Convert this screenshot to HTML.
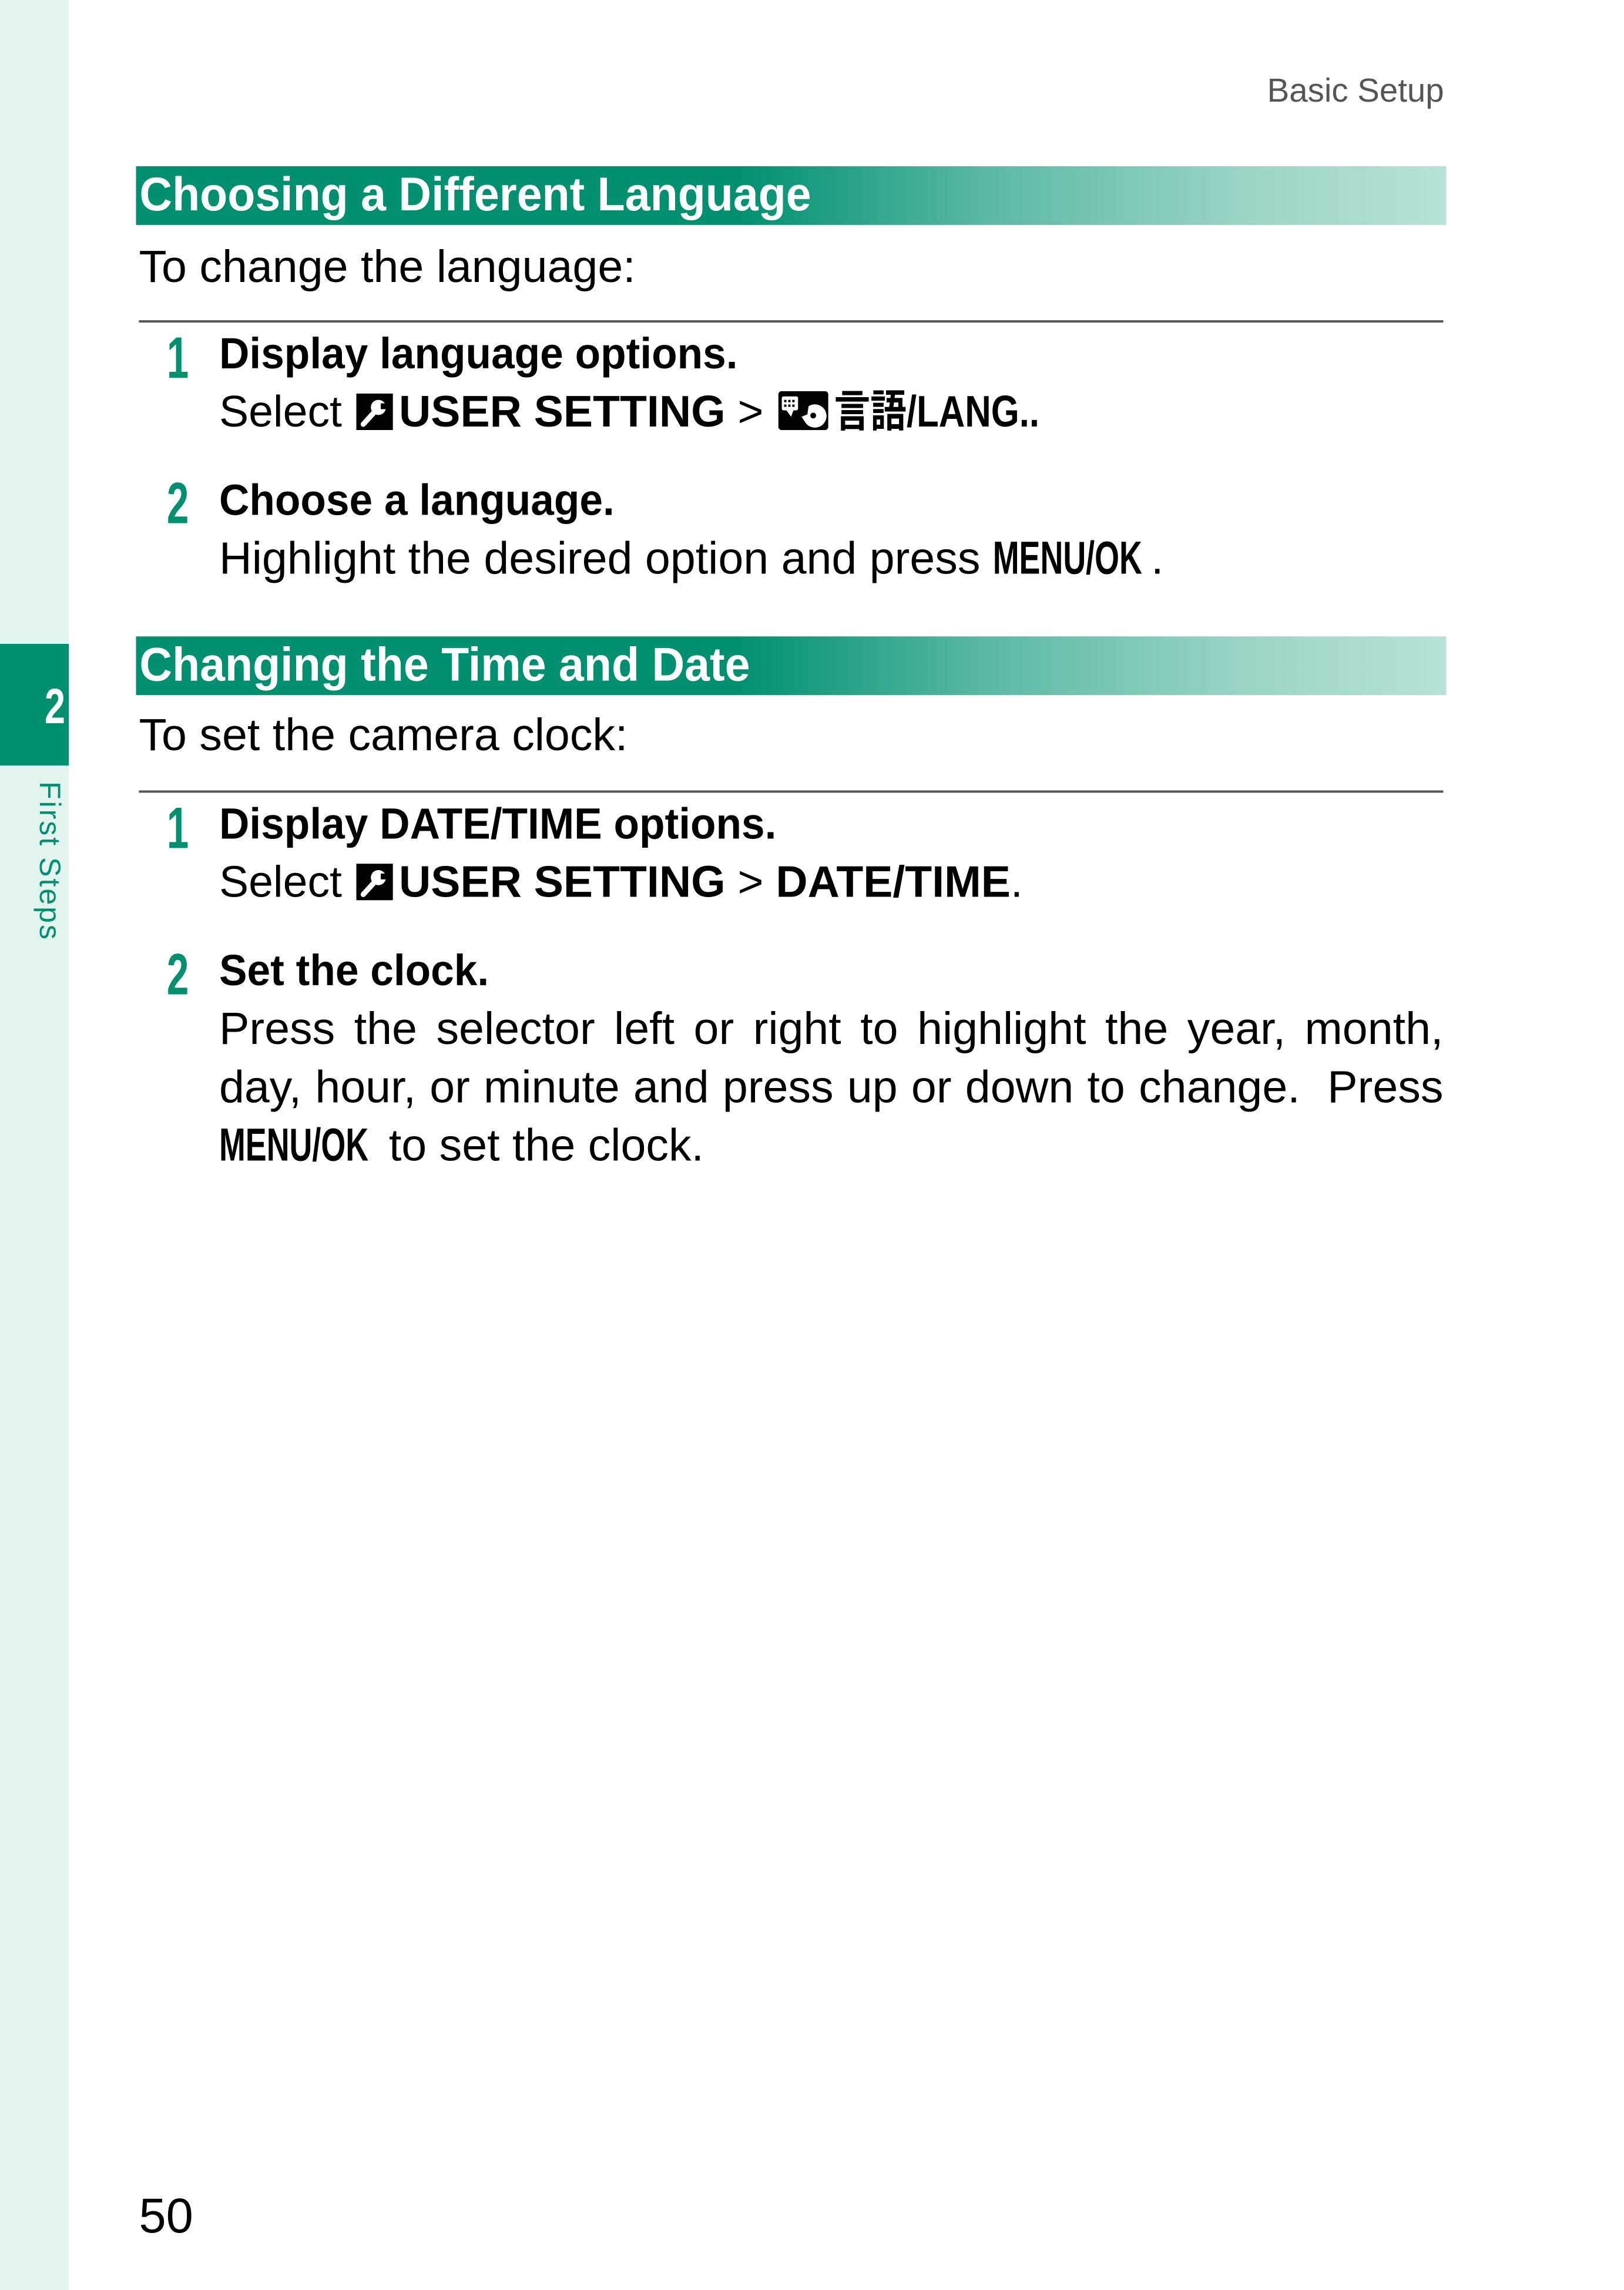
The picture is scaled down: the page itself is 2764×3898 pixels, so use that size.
<!DOCTYPE html>
<html><head><meta charset="utf-8">
<style>
*{margin:0;padding:0;box-sizing:border-box}
html,body{width:2764px;height:3898px;background:#fff;overflow:hidden}
body{position:relative;font-family:"Liberation Sans","Noto Sans CJK JP",sans-serif;color:#000}
.side{position:absolute;left:0;top:0;width:117px;height:3898px;background:#e3f3ed}
.tab{position:absolute;left:0;top:1096px;width:117px;height:207px;background:#009070}
.tabn{position:absolute;left:76px;top:1152px;color:#fff;font-weight:bold;font-size:84px;line-height:100px;transform:scaleX(.75);transform-origin:left}
.fs{position:absolute;left:60px;top:1330px;color:#009070;font-size:50px;line-height:50px;writing-mode:vertical-rl;letter-spacing:3px}
.wrap{position:absolute;left:0;top:0;width:2794px;height:3940px;transform:scale(.9893);transform-origin:0 0}
.hdr{position:absolute;left:234px;width:2254px;height:101px;background:linear-gradient(to right,#009070 0%,#009070 46%,#5cb9a4 65%,#9cd5c6 85%,#b8e2d7 100%)}
.hdr span{position:absolute;left:6px;top:0;line-height:98px;color:#fff;font-weight:bold;font-size:82px;transform:scaleX(.95);transform-origin:left;white-space:nowrap}
.l{position:absolute;line-height:100px;font-size:78px;white-space:nowrap}
.bt{position:absolute;line-height:100px;font-size:75px;font-weight:bold;white-space:nowrap;transform:scaleX(.96);transform-origin:left}
.num{position:absolute;color:#009070;font-weight:bold;font-size:100px;line-height:100px;transform:scaleX(.68);transform-origin:left}
.rule{position:absolute;left:239px;width:2244px;height:4px;background:#555}
.ic{display:inline-block;vertical-align:-6px;margin:0 10px 0 4px}
.cw{display:inline-block;white-space:nowrap}
.cw>span{display:inline-block;transform-origin:left;font-weight:bold}
.j{position:absolute;left:377px;width:2106px;font-size:78px;line-height:100px;text-align:justify;text-align-last:justify;white-space:nowrap}
</style></head><body>
<div class="side"></div>
<div class="tab"></div>
<div class="tabn">2</div>
<div class="fs">First Steps</div>

<div class="wrap">
<div class="l" style="left:2180px;top:106px;font-size:57px;color:#555;width:303px;text-align:right">Basic Setup</div>

<div class="hdr" style="top:286px"><span>Choosing a Different Language</span></div>
<div class="l" style="left:239px;top:408px">To change the language:</div>
<div class="rule" style="top:551px"></div>

<div class="num" style="left:287px;top:566px">1</div>
<div class="bt" style="left:377px;top:558px">Display language options.</div>
<div class="l" style="left:377px;top:659px;font-size:76px">Select <svg class="ic" width="63" height="63" viewBox="0 0 63 63"><rect width="63" height="63" fill="#000"/><path d="M12 53 L32 31" stroke="#fff" stroke-width="9" stroke-linecap="round"/><circle cx="38" cy="24" r="13" fill="#fff"/><rect x="42" y="17" width="14" height="10" fill="#000"/></svg><b>USER SETTING</b> &gt; <svg class="ic" width="86" height="67" viewBox="0 0 86 67"><rect width="86" height="67" rx="6" fill="#000"/><rect x="6" y="9" width="28" height="24" rx="3" fill="#fff"/><g fill="#000"><rect x="10" y="15" width="4" height="4"/><rect x="17" y="15" width="4" height="4"/><rect x="24" y="15" width="4" height="4"/><rect x="10" y="23" width="4" height="4"/><rect x="17" y="23" width="4" height="4"/><rect x="24" y="23" width="4" height="4"/></g><path d="M14 33 L22 44 L26 33z" fill="#fff"/><path d="M52 26 a20 20 0 1 1 -4 30 l-8 -12 l10 -4z" fill="#fff"/><circle cx="60" cy="42" r="5" fill="#000"/></svg><span class="cw" style="width:366px"><span style="transform:scaleX(.82)">言語/LANG..</span></span></div>

<div class="num" style="left:287px;top:816px">2</div>
<div class="bt" style="left:377px;top:810px">Choose a language.</div>
<div class="l" style="left:377px;top:910px">Highlight the desired option and press <span class="cw" style="width:272px"><span style="transform:scaleX(.68);font-size:80px">MENU/OK</span></span>.</div>

<div class="hdr" style="top:1095px"><span>Changing the Time and Date</span></div>
<div class="l" style="left:239px;top:1214px">To set the camera clock:</div>
<div class="rule" style="top:1360px"></div>

<div class="num" style="left:287px;top:1375px">1</div>
<div class="bt" style="left:377px;top:1367px">Display DATE/TIME options.</div>
<div class="l" style="left:377px;top:1468px;font-size:76px">Select <svg class="ic" width="63" height="63" viewBox="0 0 63 63"><rect width="63" height="63" fill="#000"/><path d="M12 53 L32 31" stroke="#fff" stroke-width="9" stroke-linecap="round"/><circle cx="38" cy="24" r="13" fill="#fff"/><rect x="42" y="17" width="14" height="10" fill="#000"/></svg><b>USER SETTING</b> &gt; <b>DATE/TIME</b>.</div>

<div class="num" style="left:287px;top:1627px">2</div>
<div class="bt" style="left:377px;top:1619px">Set the clock.</div>
<div class="j" style="top:1719px">Press the selector left or right to highlight the year, month,</div>
<div class="j" style="top:1820px">day, hour, or minute and press up or down to change.&nbsp; Press</div>
<div class="l" style="left:377px;top:1920px"><span class="cw" style="width:292px"><span style="transform:scaleX(.68);font-size:80px">MENU/OK</span></span>to set the clock.</div>

<div class="l" style="left:239px;top:3762px;font-size:84px">50</div>
</div>
</body></html>
